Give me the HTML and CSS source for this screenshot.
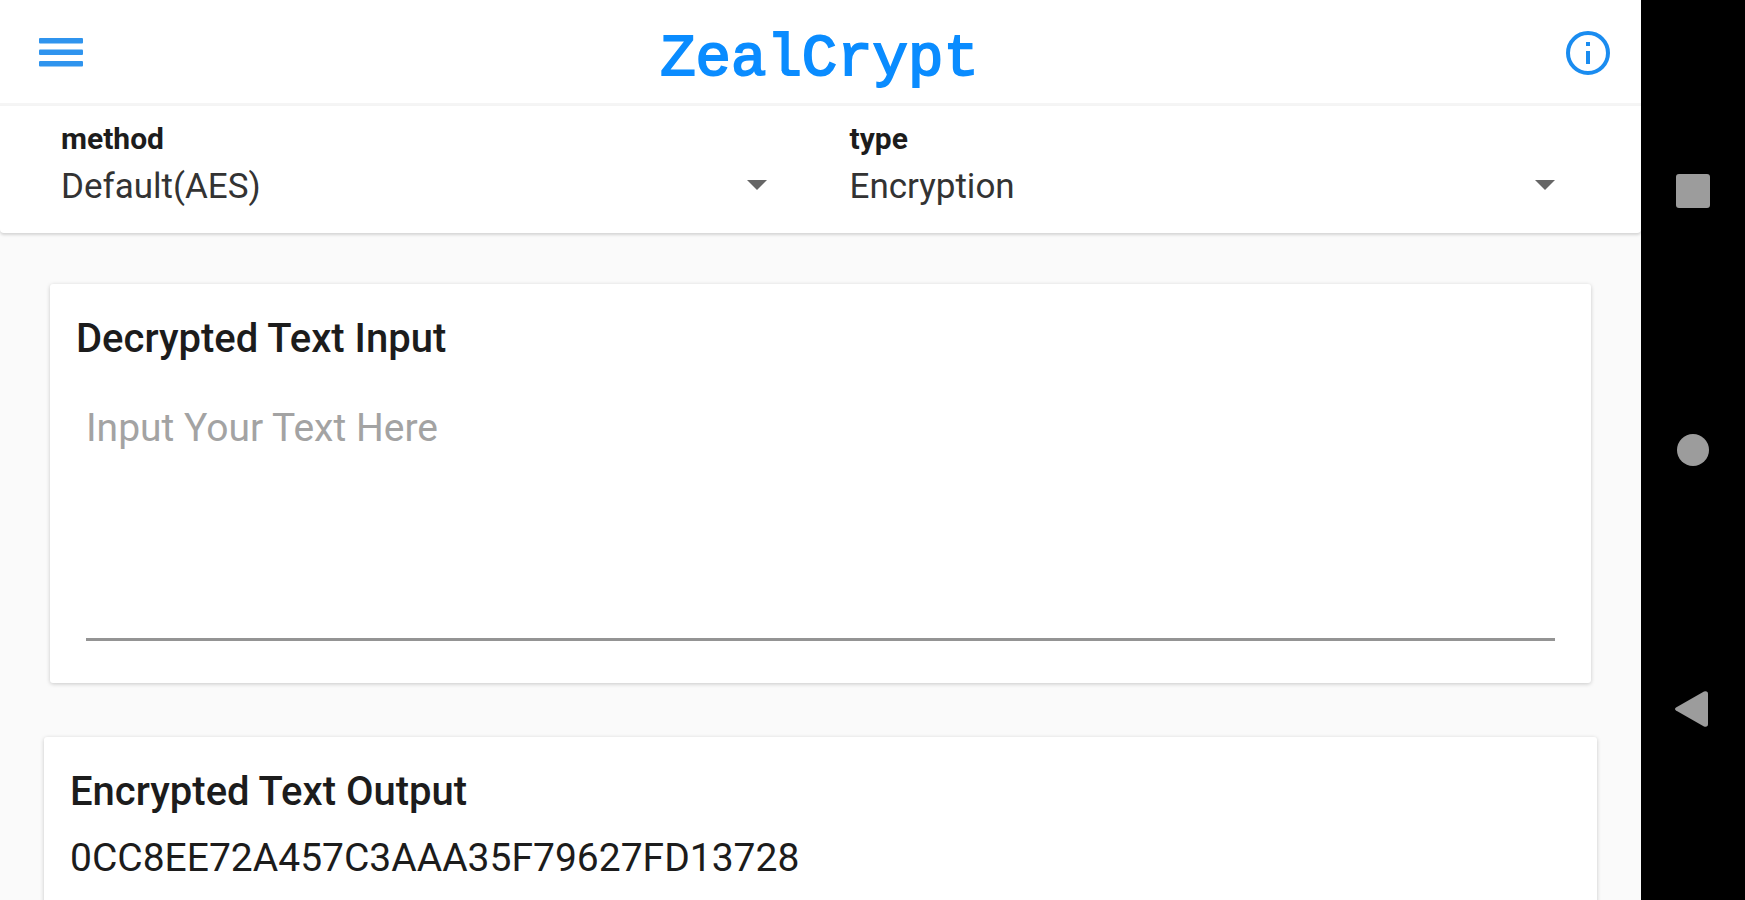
FILE: index.html
```html
<!DOCTYPE html>
<html lang="en">
<head>
    <meta charset="UTF-8">
    <meta name="viewport" content="width=device-width, initial-scale=1.0">
    <title>ZealCrypt</title>
    <link rel="stylesheet" href="styles.css">
</head>
<body>
    <div class="app">
        <header class="toolbar">
            <button type="button" class="icon-button" aria-label="Menu">
                <svg width="44" height="44" viewBox="0 0 44 44" fill="#2f94ee">
                    <rect y="7" width="44" height="5.500" rx="1"/>
                    <rect y="18.500" width="44" height="5.500" rx="1"/>
                    <rect y="30" width="44" height="5.500" rx="1"/>
                </svg>
            </button>
            <h1>ZealCrypt</h1>
            <button type="button" class="icon-button" aria-label="Info">
                <svg width="44" height="44" viewBox="0 0 44 44" fill="#1a8cf0">
                    <circle cx="22" cy="22" r="20" fill="none" stroke="#1a8cf0" stroke-width="4"/>
                    <rect x="20" y="11" width="4" height="4"/>
                    <rect x="20" y="20" width="4" height="13"/>
                </svg>
            </button>
        </header>
        <form class="options">
            <div class="option">
                <label for="method">method</label>
                <select id="method">
                    <option>Default(AES)</option>
                </select>
            </div>
            <div class="option">
                <label for="type">type</label>
                <select id="type">
                    <option>Encryption</option>
                    <option>Decryption</option>
                </select>
            </div>
        </form>
        <main class="content">
            <section class="card card-input">
                <label class="card-title" for="inputText">Decrypted Text Input</label>
                <textarea id="inputText" placeholder="Input Your Text Here"></textarea>
            </section>
            <section class="card card-output">
                <h2 class="card-title">Encrypted Text Output</h2>
                <p>0CC8EE72A457C3AAA35F79627FD13728</p>
            </section>
        </main>
    </div>
    <nav class="system-nav">
        <button type="button" aria-label="Recent apps">
            <svg width="36" height="36" viewBox="0 0 36 36"><rect x="1" y="1" width="34" height="34" rx="3"/></svg>
        </button>
        <button type="button" aria-label="Home">
            <svg width="36" height="36" viewBox="0 0 36 36"><circle cx="18" cy="18" r="16"/></svg>
        </button>
        <button type="button" aria-label="Back">
            <svg width="36" height="36" viewBox="0 0 36 36"><path d="M1 16.500 29 .500Q33 -.500 33 3V33Q33 36.500 29 35.500L1 19.500Q-1 18 1 16.500Z"/></svg>
        </button>
    </nav>
</body>
</html>
```

FILE: styles.css
```css
* {
    box-sizing: border-box;
}
body {
    display: flex;
    height: 100vh;
    margin: 0;
    overflow: hidden;
    font-family: Roboto, sans-serif;
    background: #fafafa;
    color: #1c1c1c;
}
button {
    padding: 0;
    border: none;
    background: none;
    cursor: pointer;
}
svg {
    display: block;
}
.app {
    display: flex;
    flex: 1;
    flex-direction: column;
    min-width: 0;
}
.toolbar {
    display: flex;
    flex-shrink: 0;
    align-items: center;
    justify-content: space-between;
    height: 106px;
    padding: 2px 31px 0 39px;
    background: #fff;
    border-bottom: 3px solid #f5f5f5;
}
.toolbar h1 {
    margin: 0;
    padding: 14px 10px 0 0;
    font-family: "Liberation Mono", monospace;
    font-size: 59px;
    font-weight: normal;
    line-height: 64px;
    color: #0a8cff;
    -webkit-text-stroke: 2px #0a8cff;
}
.options {
    display: grid;
    flex-shrink: 0;
    grid-template-columns: 1fr 1fr;
    height: 127px;
    padding: 15px 32px 0;
    background: #fff;
    border-radius: 0 0 4px 4px;
    box-shadow: 0 2px 3px rgba(0, 0, 0, 0.15);
}
.option {
    position: relative;
    padding: 0 54px 0 29px;
}
.option label {
    display: block;
    font-size: 30px;
    font-weight: bold;
    line-height: 36px;
}
.option select {
    display: block;
    width: 100%;
    height: 58px;
    padding: 0;
    border: none;
    appearance: none;
    background: none;
    font-family: inherit;
    font-size: 35px;
    color: #333;
}
/* dropdown arrow */
.option::after {
    content: "";
    position: absolute;
    top: 59px;
    right: 54px;
    border: 10px solid transparent;
    border-top-color: #666;
    border-bottom: none;
    pointer-events: none;
}
.content {
    display: flex;
    flex: 1;
    flex-direction: column;
    gap: 54px;
    min-height: 0;
    padding: 51px 44px 0;
    overflow: hidden;
}
.card {
    flex-shrink: 0;
    padding: 32px 26px;
    background: #fff;
    border-radius: 3px;
    box-shadow: 0 1px 4px rgba(0, 0, 0, 0.2);
}
.card-input {
    margin: 0 6px;
    padding-bottom: 42px;
}
.card-title {
    display: block;
    margin: 0;
    font-size: 40px;
    font-weight: 500;
    line-height: 46px;
}
.card-input textarea {
    display: block;
    width: calc(100% - 20px);
    height: 236px;
    margin: 43px 10px 0;
    padding: 0;
    border: none;
    border-bottom: 3px solid #949494;
    outline: none;
    resize: none;
    background: none;
    font-family: inherit;
    font-size: 39px;
    line-height: 46px;
}
.card-input textarea::placeholder {
    color: #a3a3a3;
}
.card-output {
    min-height: 300px;
}
.card-output p {
    margin: 20px 0 0;
    font-size: 39px;
    line-height: 46px;
}
.system-nav {
    display: flex;
    flex-direction: column;
    width: 104px;
    padding: 61px 0;
    background: #000;
}
.system-nav button {
    display: flex;
    flex: 1;
    align-items: center;
    justify-content: center;
}
.system-nav svg {
    fill: #9c9c9c;
}
```
